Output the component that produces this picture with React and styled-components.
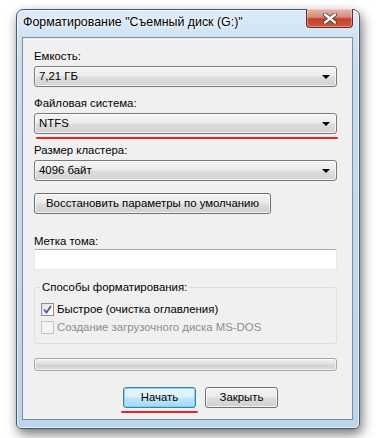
import React from 'react';
import styled, { createGlobalStyle } from 'styled-components';

const Global = createGlobalStyle`
  html, body { margin: 0; padding: 0; background: #ffffff; }
  body { font-family: "Liberation Sans", Arial, sans-serif; font-size: 11.4px; color: #000; }
`;

const Page = styled.div`
  width: 377px;
  height: 438px;
  padding: 9px 0 0 16px;
  box-sizing: border-box;
`;

// окно с рамкой Aero
const Window = styled.div`
  width: 344px;
  height: 420px;
  box-sizing: border-box;
  border: 1px solid #4b5868;
  border-radius: 7px 7px 5px 5px;
  background: linear-gradient(180deg, #dcebf9 0%, #c6dcf2 12%, #bcd4ec 100%);
  box-shadow: 2px 5px 12px rgba(0, 0, 0, 0.55), inset 0 0 0 1px rgba(255, 255, 255, 0.6);
  padding: 0 6px 8px 5px;
  display: flex;
  flex-direction: column;
`;

const TitleBar = styled.div`
  height: 27px;
  display: flex;
  align-items: flex-start;
`;

const Title = styled.div`
  padding: 5px 0 0 1px;
  font-size: 12.4px;
  line-height: 15px;
  color: #000;
  text-shadow: 0 0 6px #fff, 0 0 3px #fff;
  white-space: nowrap;
`;

const CloseBtn = styled.div`
  margin-left: auto;
  margin-top: -1px;
  width: 47px;
  height: 19px;
  box-sizing: border-box;
  border: 1px solid #6b2b24;
  border-top: none;
  border-radius: 0 0 4px 4px;
  background: linear-gradient(180deg, #e8b5ab 0%, #d88a7b 45%, #c2412b 55%, #d15a3e 100%);
  box-shadow: inset 0 0 0 1px rgba(255, 255, 255, 0.35);
  display: flex;
  align-items: center;
  justify-content: center;
`;

const Client = styled.div`
  flex: 1;
  border: 1px solid #7e8c9b;
  background: #f0f0f0;
  padding: 11px 15px 0 11px;
  display: flex;
  flex-direction: column;
`;

const Label = styled.div`
  line-height: 15px;
  height: 15px;
  margin-top: ${p => p.$top || 0}px;
  white-space: nowrap;
`;

const Field = styled.div`
  position: relative;
  margin-top: ${p => p.$top || 0}px;
`;

const Combo = styled.div`
  height: 21px;
  box-sizing: border-box;
  border: 1px solid #7a7a7a;
  border-radius: 3px;
  background: linear-gradient(180deg, #f4f4f4 0%, #ebebeb 48%, #dddddd 52%, #d2d2d2 100%);
  box-shadow: inset 0 0 0 1px rgba(255, 255, 255, 0.7);
  display: flex;
  align-items: center;
  padding: 0 6px 0 4px;
`;

const ComboText = styled.span`
  flex: 1;
  line-height: 15px;
`;

const Arrow = styled.span`
  width: 0;
  height: 0;
  border-left: 4px solid transparent;
  border-right: 4px solid transparent;
  border-top: 4px solid #000;
`;

// красная черта-подчеркивание
const RedMark = styled.div`
  position: absolute;
  left: ${p => p.$left}px;
  width: ${p => p.$width}px;
  bottom: ${p => p.$bottom}px;
  height: 2px;
  background: #ee2222;
  border-radius: 1px;
`;

const Button = styled.div`
  width: ${p => p.$width}px;
  height: 21px;
  box-sizing: border-box;
  border: 1px solid ${p => (p.$default ? '#3c7fb1' : '#707070')};
  border-radius: 3px;
  background: ${p =>
    p.$default
      ? 'linear-gradient(180deg, #eaf6fd 0%, #d9f0fc 48%, #bee6fd 52%, #a7d9f5 100%)'
      : 'linear-gradient(180deg, #f2f2f2 0%, #ebebeb 48%, #dddddd 52%, #cfcfcf 100%)'};
  box-shadow: inset 0 0 0 1px ${p => (p.$default ? 'rgba(120, 210, 245, 0.9)' : 'rgba(255, 255, 255, 0.75)')};
  display: flex;
  align-items: center;
  justify-content: center;
  line-height: 15px;
  white-space: nowrap;
  margin-top: ${p => p.$top || 0}px;
`;

const TextInput = styled.div`
  height: 21px;
  box-sizing: border-box;
  background: #fff;
  border: 1px solid #e3e9ef;
  border-top-color: #abadb3;
  border-radius: 2px;
`;

const Group = styled.div`
  position: relative;
  margin-top: 17px;
  height: 57px;
  box-sizing: border-box;
  padding: 15px 0 0 6px;
  border: 1px solid #d5dfe5;
  border-radius: 3px;
  display: flex;
  flex-direction: column;
  gap: 5px;
`;

const Legend = styled.div`
  position: absolute;
  top: -8px;
  left: 5px;
  padding: 0 2px;
  background: #f0f0f0;
  line-height: 15px;
`;

const CheckRow = styled.div`
  display: flex;
  align-items: center;
  gap: 3px;
  height: 13px;
  line-height: 15px;
  white-space: nowrap;
  color: ${p => (p.$disabled ? '#8d8d8d' : '#000')};
`;

const Box = styled.span`
  flex: none;
  width: 13px;
  height: 13px;
  box-sizing: border-box;
  border: 1px solid ${p => (p.$disabled ? '#c5c5c5' : '#8e8f8f')};
  background: ${p =>
    p.$disabled ? '#f4f4f4' : 'linear-gradient(135deg, #dedede 0%, #f4f4f4 60%, #ffffff 100%)'};
  display: flex;
  align-items: center;
  justify-content: center;
`;

const Progress = styled.div`
  margin-top: 14px;
  height: 13px;
  box-sizing: border-box;
  border: 1px solid #a8a8a8;
  border-radius: 3px;
  background: linear-gradient(180deg, #f3f3f3 0%, #e0e0e0 45%, #d2d2d2 55%, #dedede 100%);
  box-shadow: inset 0 0 0 1px rgba(255, 255, 255, 0.6);
`;

const Footer = styled.div`
  display: flex;
  gap: 9px;
  margin-top: 16px;
  padding-left: 89px;
`;

const BtnWrap = styled.div`
  position: relative;
`;

export default function App() {
  return (
    <Page>
      <Global />
      <Window>
        <TitleBar>
          <Title>Форматирование "Съемный диск (G:)"</Title>
          <CloseBtn>
            <svg width="14" height="11" viewBox="0 0 14 11">
              <path
                d="M2 1.5 L12 9.5 M12 1.5 L2 9.5"
                stroke="#3a2a2a"
                strokeWidth="4.2"
                strokeLinecap="round"
                opacity="0.75"
              />
              <path d="M2 1.5 L12 9.5 M12 1.5 L2 9.5" stroke="#ffffff" strokeWidth="2.4" strokeLinecap="round" />
            </svg>
          </CloseBtn>
        </TitleBar>
        <Client>
          <Label>Емкость:</Label>
          <Field $top={2}>
            <Combo>
              <ComboText>7,21 ГБ</ComboText>
              <Arrow />
            </Combo>
          </Field>
          <Label $top={9}>Файловая система:</Label>
          <Field $top={2}>
            <Combo>
              <ComboText>NTFS</ComboText>
              <Arrow />
            </Combo>
            <RedMark $left={2} $width={302} $bottom={-5} />
          </Field>
          <Label $top={9}>Размер кластера:</Label>
          <Field $top={2}>
            <Combo>
              <ComboText>4096 байт</ComboText>
              <Arrow />
            </Combo>
          </Field>
          <Button $width={237} $top={12}>Восстановить параметры по умолчанию</Button>
          <Label $top={20}>Метка тома:</Label>
          <TextInput />
          <Group>
            <Legend>Способы форматирования:</Legend>
            <CheckRow>
              <Box>
                <svg width="9" height="9" viewBox="0 0 9 9">
                  <path d="M1 4.5 L3.5 7.5 L8 1" fill="none" stroke="#4a5d8f" strokeWidth="1.8" />
                </svg>
              </Box>
              Быстрое (очистка оглавления)
            </CheckRow>
            <CheckRow $disabled>
              <Box $disabled />
              Создание загрузочного диска MS-DOS
            </CheckRow>
          </Group>
          <Progress />
          <Footer>
            <BtnWrap>
              <Button $width={73} $default>Начать</Button>
              <RedMark $left={-2} $width={77} $bottom={-5} />
            </BtnWrap>
            <Button $width={73}>Закрыть</Button>
          </Footer>
        </Client>
      </Window>
    </Page>
  );
}
